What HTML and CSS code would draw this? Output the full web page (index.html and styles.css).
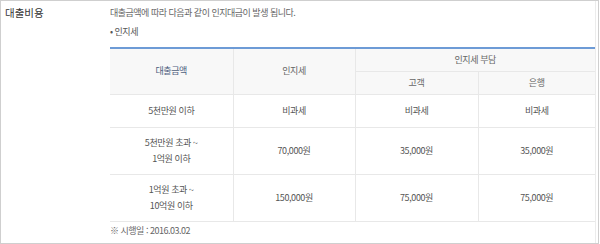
FILE: index.html
```html
<!DOCTYPE html>
<html lang="ko">
<head>
<meta charset="utf-8">
<link rel="stylesheet" href="styles.css">
</head>
<body>
<div class="wrap">
  <div class="label">대출비용</div>
  <div class="content">
    <p class="desc">대출금액에 따라 다음과 같이 인지대금이 발생 됩니다.</p>
    <p class="bullet">• 인지세</p>
    <table class="tbl">
      <colgroup>
        <col class="c1"><col class="c2"><col class="c3"><col class="c4">
      </colgroup>
      <thead>
        <tr class="h1">
          <th rowspan="2" class="main">대출금액</th>
          <th rowspan="2">인지세</th>
          <th colspan="2">인지세 부담</th>
        </tr>
        <tr class="h2">
          <th>고객</th>
          <th>은행</th>
        </tr>
      </thead>
      <tbody>
        <tr class="r1"><td>5천만원 이하</td><td>비과세</td><td>비과세</td><td>비과세</td></tr>
        <tr class="r2"><td>5천만원 초과 ~<br>1억원 이하</td><td>70,000원</td><td>35,000원</td><td>35,000원</td></tr>
        <tr class="r2"><td>1억원 초과 ~<br>10억원 이하</td><td>150,000원</td><td>75,000원</td><td>75,000원</td></tr>
      </tbody>
    </table>
    <p class="note">※ 시행일 : 2016.03.02</p>
  </div>
</div>
</body>
</html>
```

FILE: styles.css
```css
html, body {
  margin: 0;
  padding: 0;
  background: #fff;
}
body {
  font-family: "Noto Sans CJK KR", "Noto Sans", sans-serif;
  color: #666;
}
.wrap {
  box-sizing: border-box;
  width: 599px;
  height: 244px;
  border: 1px solid #cfcfcf;
  display: grid;
  grid-template-columns: 109px 486px 1fr;
}
.label {
  font-size: 10.5px;
  color: #333;
  padding: 4px 0 0 4px;
  line-height: 16px;
}
.content {
  border-right: 1px solid #ececec;
  padding-top: 4px;
}
.desc, .bullet, .note {
  margin: 0;
  font-size: 9px;
  line-height: 16px;
  letter-spacing: -0.5px;
  color: #666;
}
.bullet {
  margin-top: 3px;
  color: #555;
}
.tbl {
  margin-top: 7px;
  width: 485px;
  border-collapse: collapse;
  table-layout: fixed;
  border-top: 2px solid #6d9bd6;
  border-bottom: 1px solid #dcdcdc;
  font-size: 9px;
  letter-spacing: -0.4px;
  color: #555;
}
.c1 { width: 123px; }
.c2 { width: 122px; }
.c3 { width: 123px; }
.tbl th, .tbl td {
  text-align: center;
  border: 1px solid #e8e8e8;
  padding: 0;
  font-weight: normal;
  line-height: 16px;
}
.tbl tr > :first-child { border-left: none; }
.tbl tr > :last-child { border-right: none; }
.tbl th {
  background: #f8f8f8;
  color: #666;
}
.tbl th.main { color: #4e5f80; }
.tbl tr.h2 > :last-child { border-right: none; }
.h1 { height: 23px; }
.h2 { height: 23px; }
.r1 { height: 33px; }
.r2 { height: 47px; }
.note {
  margin-top: 1px;
  color: #666;
}
```
